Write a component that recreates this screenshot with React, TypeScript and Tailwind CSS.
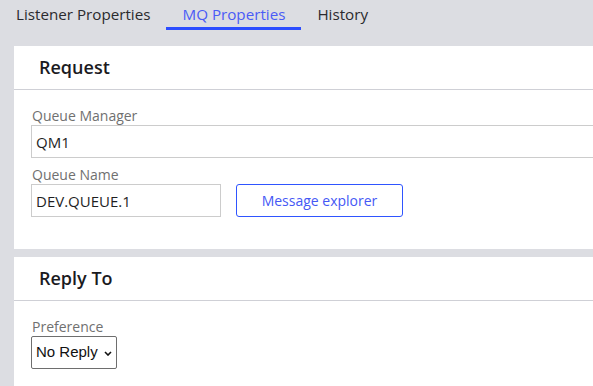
import { useState } from "react";

const tabs = ["Listener Properties", "MQ Properties", "History"];

const Field = ({ label, children }: { label: string; children: React.ReactNode }) => (
  <div className="flex flex-col">
    <div className="h-[19px] text-[14px] leading-[19px] text-[#707070] pl-[1px]">{label}</div>
    {children}
  </div>
);

const Card = ({ title, children }: { title: string; children: React.ReactNode }) => (
  <div className="ml-[14px] -mr-6 bg-white">
    <div className="h-[44px] flex items-center pl-[25px] border-b border-[#cfd0d6]">
      <h2 className="text-[18px] font-semibold text-[#1b1b1f]">{title}</h2>
    </div>
    {children}
  </div>
);

export default function App() {
  const [active, setActive] = useState(1);
  const [pref, setPref] = useState("none");

  return (
    <div
      className="w-[593px] h-[386px] overflow-hidden bg-[#dcdde2] text-[#1f1f1f]"
      style={{ fontFamily: '"Open Sans", sans-serif' }}
    >
      <div className="flex h-[30px]">
        {tabs.map((t, i) => (
          <div
            key={t}
            onClick={() => setActive(i)}
            className={
              i === active
                ? "px-4 pt-[1px] text-[15.2px] leading-[26px] text-[#4a5bf6] border-b-[3px] border-[#2c4dff] cursor-pointer"
                : "px-4 pt-[1px] text-[15.2px] leading-[26px] text-[#2a2a2e] border-b-[3px] border-transparent cursor-pointer"
            }
          >
            {t}
          </div>
        ))}
      </div>

      <div className="mt-4">
        <Card title="Request">
          <div className="pl-[17px] pt-4 pb-8 flex flex-col gap-[7px]">
            <Field label="Queue Manager">
              <input
                defaultValue="QM1"
                className="w-[580px] h-[33px] border border-[#cccccc] px-1 text-[15px] text-[#1f1f1f] outline-none"
              />
            </Field>
            <Field label="Queue Name">
              <div className="flex items-center gap-[15px]">
                <input
                  defaultValue="DEV.QUEUE.1"
                  className="w-[190px] h-[33px] border border-[#cccccc] px-1 text-[15px] text-[#1f1f1f] outline-none"
                />
                <button className="w-[167px] h-[33px] border border-[#2f55ff] rounded-[3px] text-[14px] text-[#4558f5] bg-white">
                  Message explorer
                </button>
              </div>
            </Field>
          </div>
        </Card>

        <div className="mt-2">
          <Card title="Reply To">
            <div className="pl-[17px] pt-4 pb-8">
              <Field label="Preference">
                <div className="relative w-[86px] h-[33px]">
                  <select
                    value={pref}
                    onChange={(e) => setPref(e.target.value)}
                    className="appearance-none w-full h-full border border-[#6e6e6e] rounded-[2px] pl-1 text-[15px] text-[#111] bg-white"
                    style={{ fontFamily: '"Liberation Sans", Arial, sans-serif' }}
                  >
                    <option value="none">No Reply</option>
                    <option value="queue">Queue</option>
                  </select>
                  <svg
                    className="absolute left-[73px] top-[15px] pointer-events-none"
                    width="8"
                    height="5"
                    viewBox="0 0 8 5"
                  >
                    <path d="M1 1l3 3 3-3" fill="none" stroke="#111" strokeWidth="1.6" />
                  </svg>
                </div>
              </Field>
            </div>
          </Card>
        </div>
      </div>
    </div>
  );
}
